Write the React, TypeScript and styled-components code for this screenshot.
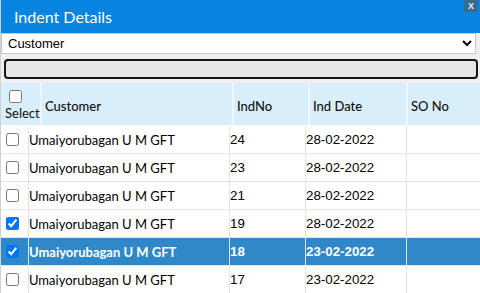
import styled, { createGlobalStyle } from 'styled-components';

const GlobalStyle = createGlobalStyle`
    html, body {
        margin: 0;
        padding: 0;
        background: #ffffff;
    }
    * {
        box-sizing: border-box;
    }
`;

type Indent = {
    id: number;
    customer: string;
    date: string;
    soNo: string;
    checked: boolean;
    selected?: boolean;
};

const indents: Indent[] = [
    { id: 24, customer: 'Umaiyorubagan U M GFT', date: '28-02-2022', soNo: '', checked: false },
    { id: 23, customer: 'Umaiyorubagan U M GFT', date: '28-02-2022', soNo: '', checked: false },
    { id: 21, customer: 'Umaiyorubagan U M GFT', date: '28-02-2022', soNo: '', checked: false },
    { id: 19, customer: 'Umaiyorubagan U M GFT', date: '28-02-2022', soNo: '', checked: true },
    { id: 18, customer: 'Umaiyorubagan U M GFT', date: '23-02-2022', soNo: '', checked: true, selected: true },
    { id: 17, customer: 'Umaiyorubagan U M GFT', date: '23-02-2022', soNo: '', checked: false },
];

const HEAD_COLS = '41px 192px 76px 98px 1fr';
const BODY_COLS = '28px 201px 76px 101px 1fr';

export default function App() {
    return (
        <>
            <GlobalStyle />
            <Dialog>
                <TitleBar>
                    Indent Details
                    <CloseBtn>X</CloseBtn>
                </TitleBar>
                <FilterSelect defaultValue="customer">
                    <option value="customer">Customer</option>
                    <option value="indno">IndNo</option>
                </FilterSelect>
                <SearchWrap>
                    <SearchBox />
                </SearchWrap>
                <HeadRow>
                    <SelectHead>
                        <input type="checkbox" />
                        <span>Select</span>
                    </SelectHead>
                    <HeadCell>Customer</HeadCell>
                    <HeadCell>IndNo</HeadCell>
                    <HeadCell>Ind Date</HeadCell>
                    <HeadCell $last>SO No</HeadCell>
                </HeadRow>
                {indents.map((row) => (
                    <BodyRow key={row.id} $selected={row.selected}>
                        <CheckCell>
                            <input type="checkbox" defaultChecked={row.checked} />
                        </CheckCell>
                        <NameCell>{row.customer}</NameCell>
                        <NumCell>{row.id}</NumCell>
                        <NumCell>{row.date}</NumCell>
                        <NumCell $last>{row.soNo}</NumCell>
                    </BodyRow>
                ))}
            </Dialog>
        </>
    );
}

const Dialog = styled.div`
    position: relative;
    width: 480px;
    height: 293px;
    overflow: hidden;
    background: #efefef;
    border-left: 1px solid #d0d0d0;
`;

const TitleBar = styled.div`
    height: 33px;
    display: flex;
    align-items: center;
    padding-left: 13px;
    background: #0784e0;
    color: #ffffff;
    font-family: Lato, 'Liberation Sans', sans-serif;
    font-size: 16px;
`;

const CloseBtn = styled.span`
    position: absolute;
    top: 0;
    right: 2px;
    width: 14px;
    height: 12px;
    display: flex;
    align-items: center;
    justify-content: center;
    background: #3a6c92;
    color: #e8eef4;
    font-family: 'Liberation Sans', sans-serif;
    font-size: 9px;
    font-weight: bold;
`;

const FilterSelect = styled.select`
    display: block;
    width: 475px;
    height: 21px;
    margin: 0;
    padding: 0 2px;
    border: 1px solid #c8c8c8;
    border-radius: 0;
    background: #ffffff;
    color: #000000;
    font-family: 'Liberation Sans', Arial, sans-serif;
    font-size: 13px;
`;

const SearchWrap = styled.div`
    padding: 5px 2px 4px 3px;
    background: #efefef;
`;

const SearchBox = styled.div`
    height: 20px;
    border: 2px solid #161616;
    border-radius: 4px;
    background: #e6e6e6;
`;

const HeadRow = styled.div`
    display: grid;
    grid-template-columns: ${HEAD_COLS};
    height: 43px;
    background: #d9eefb;
    border-bottom: 1px solid #ffffff;
`;

const HeadCell = styled.div<{ $last?: boolean }>`
    display: flex;
    align-items: center;
    padding: 3px 0 0 3px;
    border-right: ${(p) => (p.$last ? 'none' : '2px solid #eef6fc')};
    color: #111111;
    font-family: Lato, sans-serif;
    font-size: 13px;
    font-weight: 500;
`;

const SelectHead = styled.div`
    display: flex;
    flex-direction: column;
    align-items: flex-start;
    padding: 4px 0 0 4px;
    border-right: 2px solid #eef6fc;
    font-family: Lato, sans-serif;
    font-size: 13px;
    color: #111111;

    input {
        margin: 3px 0 2px 4px;
        width: 13px;
        height: 13px;
    }
`;

const BodyRow = styled.div<{ $selected?: boolean }>`
    display: grid;
    grid-template-columns: ${BODY_COLS};
    height: 28px;
    background: ${(p) => (p.$selected ? '#2f88c7' : '#ffffff')};
    color: ${(p) => (p.$selected ? '#ffffff' : '#000000')};
    font-weight: ${(p) => (p.$selected ? 'bold' : 'normal')};
    border-bottom: 1px solid #e4e4e4;
`;

const CheckCell = styled.div`
    display: flex;
    align-items: center;
    border-right: 1px solid #e4e4e4;

    input {
        margin: 0 0 0 5px;
        width: 13px;
        height: 13px;
    }
`;

const NameCell = styled.div`
    display: flex;
    align-items: center;
    padding-left: 0;
    border-right: 1px solid #e4e4e4;
    font-family: Lato, sans-serif;
    font-size: 13px;
`;

const NumCell = styled.div<{ $last?: boolean }>`
    display: flex;
    align-items: center;
    padding-left: 0;
    border-right: ${(p) => (p.$last ? 'none' : '1px solid #e4e4e4')};
    font-family: 'Liberation Sans', Arial, sans-serif;
    font-size: 13.333px;
`;
